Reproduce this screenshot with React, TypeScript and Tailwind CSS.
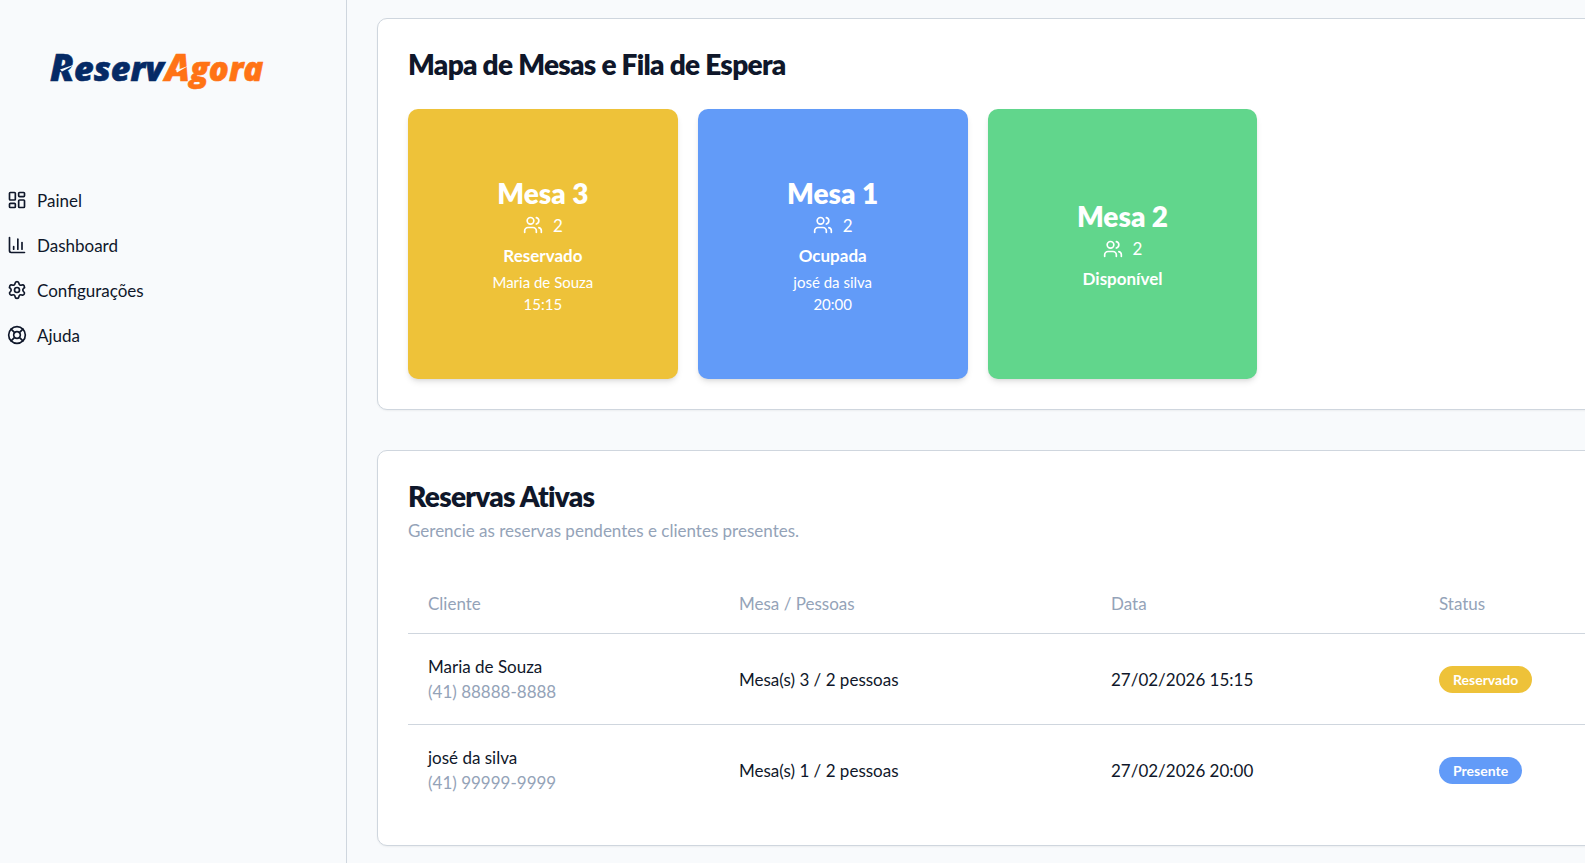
import { ChartColumn, LayoutDashboard, LifeBuoy, Settings, Users, type LucideIcon } from 'lucide-react'
import { clsx } from 'clsx'

type Status = 'reservado' | 'ocupada' | 'disponivel'

interface Mesa {
  numero: number
  lugares: number
  status: Status
  label: string
  cliente?: string
  hora?: string
}

interface Reserva {
  cliente: string
  telefone: string
  mesa: string
  data: string
  status: Status
  label: string
}

const statusColors: Record<Status, string> = {
  reservado: 'bg-[#eec239]',
  ocupada: 'bg-[#629bf8]',
  disponivel: 'bg-[#61d68c]',
}

const navItems: { label: string; href: string; icon: LucideIcon }[] = [
  { label: 'Painel', href: '#painel', icon: LayoutDashboard },
  { label: 'Dashboard', href: '#dashboard', icon: ChartColumn },
  { label: 'Configurações', href: '#configuracoes', icon: Settings },
  { label: 'Ajuda', href: '#ajuda', icon: LifeBuoy },
]

const mesas: Mesa[] = [
  { numero: 3, lugares: 2, status: 'reservado', label: 'Reservado', cliente: 'Maria de Souza', hora: '15:15' },
  { numero: 1, lugares: 2, status: 'ocupada', label: 'Ocupada', cliente: 'josé da silva', hora: '20:00' },
  { numero: 2, lugares: 2, status: 'disponivel', label: 'Disponível' },
]

const reservas: Reserva[] = [
  {
    cliente: 'Maria de Souza',
    telefone: '(41) 88888-8888',
    mesa: 'Mesa(s) 3 / 2 pessoas',
    data: '27/02/2026 15:15',
    status: 'reservado',
    label: 'Reservado',
  },
  {
    cliente: 'josé da silva',
    telefone: '(41) 99999-9999',
    mesa: 'Mesa(s) 1 / 2 pessoas',
    data: '27/02/2026 20:00',
    status: 'ocupada',
    label: 'Presente',
  },
]

function Logo() {
  return (
    <svg
      className="h-[60px] w-[220px] font-['Open_Sans',sans-serif] font-extrabold italic"
      viewBox="0 0 220 60"
      role="img"
      aria-label="ReservAgora"
    >
      <g fill="#052a66" stroke="#052a66" strokeWidth="0.6">
        <text x="4" y="45" fontSize="37">R</text>
        <text x="28" y="45" fontSize="34">eserv</text>
      </g>
      <g fill="#ff7315" stroke="#ff7315" strokeWidth="0.6">
        <text x="119" y="45" fontSize="37">A</text>
        <text x="144" y="45" fontSize="33">gora</text>
      </g>
      {/* swoosh cut through the capitals */}
      <path d="M14 33.5 30 28 16 35.5z" fill="#f8fafc" />
      <path d="M130 34.5 143 29.5 131 36.5z" fill="#f8fafc" />
    </svg>
  )
}

function Sidebar() {
  return (
    <aside className="w-[347px] shrink-0 border-r border-[#cfd6de]">
      <div className="px-[46px] pt-9">
        <Logo />
      </div>
      <nav className="mt-[84px] flex flex-col gap-[5px]">
        {navItems.map(({ label, href, icon: Icon }) => (
          <a key={label} href={href} className="flex h-10 items-center gap-[10px] px-[7px]">
            <Icon className="size-5" />
            {label}
          </a>
        ))}
      </nav>
    </aside>
  )
}

function MesaCard({ mesa }: { mesa: Mesa }) {
  return (
    <button
      type="button"
      className={clsx(
        'flex aspect-square flex-col items-center justify-center rounded-[10px] text-white shadow-md',
        statusColors[mesa.status],
      )}
    >
      <span className="text-[28px] leading-10 font-extrabold">Mesa {mesa.numero}</span>
      <span className="flex items-center gap-[10px]">
        <Users className="size-5" />
        {mesa.lugares}
      </span>
      <span className="mt-[5px] font-bold">{mesa.label}</span>
      {mesa.cliente && (
        <span className="mt-[3px] text-[15px] leading-[22px]">
          {mesa.cliente}
          <br />
          {mesa.hora}
        </span>
      )}
    </button>
  )
}

export default function App() {
  return (
    <div className="flex min-h-screen overflow-hidden bg-slate-50 font-['Lato',sans-serif] text-[17px] leading-[25px] text-[#0f172a]">
      <Sidebar />

      {/* The board keeps room for five tables per row */}
      <main className="flex min-w-[1551px] flex-1 flex-col gap-10 px-[30px] py-[18px]">
        <section className="rounded-[10px] border border-[#cfd6de] bg-white p-[30px] shadow-xs">
          <h2 className="text-[28px] leading-[30px] font-extrabold tracking-tight">Mapa de Mesas e Fila de Espera</h2>
          <div className="mt-[30px] grid grid-cols-5 gap-5">
            {mesas.map((mesa) => (
              <MesaCard key={mesa.numero} mesa={mesa} />
            ))}
          </div>
        </section>

        <section className="rounded-[10px] border border-[#cfd6de] bg-white p-[30px] shadow-xs">
          <h2 className="text-[28px] leading-[30px] font-extrabold tracking-tight">Reservas Ativas</h2>
          <p className="mt-[7px] text-[#94a3b8]">Gerencie as reservas pendentes e clientes presentes.</p>
          <table className="mt-[31px] w-full table-fixed text-left">
            <thead>
              <tr className="h-[60px] border-b border-[#cfd6de] text-[#94a3b8]">
                <th className="w-[311px] px-5 font-normal">Cliente</th>
                <th className="w-[372px] px-5 font-normal">Mesa / Pessoas</th>
                <th className="w-[328px] px-5 font-normal">Data</th>
                <th className="px-5 font-normal">Status</th>
              </tr>
            </thead>
            <tbody>
              {reservas.map((reserva) => (
                <tr key={reserva.telefone} className="border-b border-[#cfd6de] last:border-0">
                  <td className="p-5">
                    <div>{reserva.cliente}</div>
                    <div className="text-[#94a3b8]">{reserva.telefone}</div>
                  </td>
                  <td className="p-5">{reserva.mesa}</td>
                  <td className="p-5">{reserva.data}</td>
                  <td className="p-5">
                    <span
                      className={clsx(
                        'inline-flex h-[27px] items-center rounded-full px-[14px] text-[14px] font-bold text-white',
                        statusColors[reserva.status],
                      )}
                    >
                      {reserva.label}
                    </span>
                  </td>
                </tr>
              ))}
            </tbody>
          </table>
        </section>
      </main>
    </div>
  )
}
